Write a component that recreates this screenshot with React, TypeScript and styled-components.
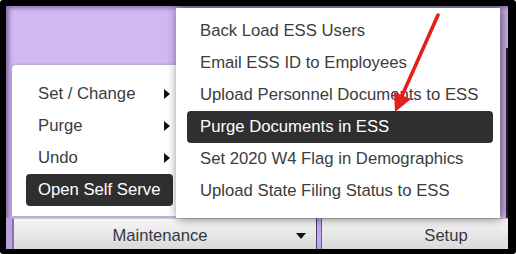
import styled, { createGlobalStyle } from "styled-components";

const GlobalStyle = createGlobalStyle`
  html, body {
    margin: 0;
    padding: 0;
    background: #fff;
  }
  body {
    font-family: "Liberation Sans", Arial, sans-serif;
  }
`;

const mainItems = [
  { label: "Set / Change", sub: true },
  { label: "Purge", sub: true },
  { label: "Undo", sub: true },
  { label: "Open Self Serve", sub: false, active: true },
];

const essItems = [
  { label: "Back Load ESS Users" },
  { label: "Email ESS ID to Employees" },
  { label: "Upload Personnel Documents to ESS" },
  { label: "Purge Documents in ESS", active: true },
  { label: "Set 2020 W4 Flag in Demographics" },
  { label: "Upload State Filing Status to ESS" },
];

function App() {
  return (
    <>
      <GlobalStyle />
      <Frame>
        <Screen>
          <Stage>
            <MainMenu>
              {mainItems.map((item) => (
                <MenuItem key={item.label} $active={item.active}>
                  <span>{item.label}</span>
                  {item.sub && <SubArrow />}
                </MenuItem>
              ))}
            </MainMenu>

            <SubMenu>
              {essItems.map((item) => (
                <SubItem key={item.label} $active={item.active}>
                  {item.label}
                </SubItem>
              ))}
            </SubMenu>

            <Pointer width="502" height="212" viewBox="0 0 502 212">
              <line
                x1="432"
                y1="9"
                x2="395"
                y2="92"
                stroke="#e3201c"
                strokeWidth="3.6"
                strokeLinecap="round"
              />
              <polygon points="389,106 388,86 405,93" fill="#e3201c" />
            </Pointer>
          </Stage>

          <BottomBar>
            <TabButton $width={304} $accent>
              <span />
              <span>Maintenance</span>
              <Caret />
            </TabButton>
            <Divider />
            <TabButton $width={258}>
              <span />
              <span>Setup</span>
              <span />
            </TabButton>
          </BottomBar>
        </Screen>
      </Frame>
    </>
  );
}

export default App;

const Frame = styled.div`
  width: 516px;
  height: 254px;
  box-sizing: border-box;
  padding: 6px 8px 5px 6px;
  background: #000;
  border-radius: 3px;
`;

const Screen = styled.div`
  height: 100%;
  display: flex;
  flex-direction: column;
  background: #d2b7f1;
  overflow: hidden;
  box-shadow: inset 4px 3px 4px -1px rgba(40, 20, 70, 0.45);
`;

const Stage = styled.div`
  position: relative;
  flex: 1;

  &::before {
    content: "";
    position: absolute;
    right: 0;
    top: 42px;
    bottom: 0;
    width: 2px;
    background: #2a1d4d;
  }
`;

const MainMenu = styled.div`
  position: absolute;
  left: 6px;
  top: 59px;
  width: 164px;
  height: 151px;
  box-sizing: border-box;
  padding: 13px 3px 0 14px;
  background: #fff;
  border-radius: 4px 0 0 0;
  box-shadow: 0 0 3px rgba(0, 0, 0, 0.25);
  display: flex;
  flex-direction: column;
`;

const MenuItem = styled.div<{ $active?: boolean }>`
  height: 32px;
  flex-shrink: 0;
  display: flex;
  align-items: center;
  justify-content: space-between;
  padding: 0 3px 0 12px;
  border-radius: 4px;
  font-size: 16.7px;
  color: ${(p) => (p.$active ? "#fff" : "#3c3c3c")};
  background: ${(p) => (p.$active ? "#2f2f2f" : "transparent")};
`;

const SubArrow = styled.i`
  width: 0;
  height: 0;
  border-top: 5px solid transparent;
  border-bottom: 5px solid transparent;
  border-left: 6px solid #111;
`;

const SubMenu = styled.div`
  position: absolute;
  left: 170px;
  top: 2px;
  width: 324px;
  height: 210px;
  box-sizing: border-box;
  padding: 7px 7px 0 11px;
  background: #fff;
  box-shadow: 2px 0 10px rgba(0, 0, 0, 0.6);
  display: flex;
  flex-direction: column;
`;

const SubItem = styled.div<{ $active?: boolean }>`
  height: 32px;
  flex-shrink: 0;
  display: flex;
  align-items: center;
  padding-left: 13px;
  border-radius: 4px;
  font-size: 16.7px;
  color: ${(p) => (p.$active ? "#fff" : "#3c3c3c")};
  background: ${(p) => (p.$active ? "#2f2f2f" : "transparent")};
`;

const Pointer = styled.svg`
  position: absolute;
  left: 0;
  top: 0;
  pointer-events: none;
`;

const BottomBar = styled.div`
  height: 31px;
  flex-shrink: 0;
  display: flex;
  padding-left: 6px;
  background: #b9a3d6;
`;

const TabButton = styled.div<{ $width: number; $accent?: boolean }>`
  width: ${(p) => p.$width}px;
  flex-shrink: 0;
  box-sizing: border-box;
  display: grid;
  grid-template-columns: 1fr auto 1fr;
  align-items: center;
  padding: 4px 10px 0 0;
  font-size: 16.6px;
  color: #363644;
  background: linear-gradient(#f7f7f7, #e4e4e4 60%, #d9d9d9);
  border-top: 1px solid #c9c9c9;
  border-left: ${(p) => (p.$accent ? "2px solid #8a70b4" : "none")};
`;

const Caret = styled.i`
  justify-self: end;
  width: 0;
  height: 0;
  border-left: 5px solid transparent;
  border-right: 5px solid transparent;
  border-top: 6px solid #111;
`;

const Divider = styled.div`
  width: 6px;
  flex-shrink: 0;
  box-sizing: border-box;
  background: #c3a7ee;
  border-left: 1px solid #4a4060;
  border-right: 1px solid #6a6080;
`;
